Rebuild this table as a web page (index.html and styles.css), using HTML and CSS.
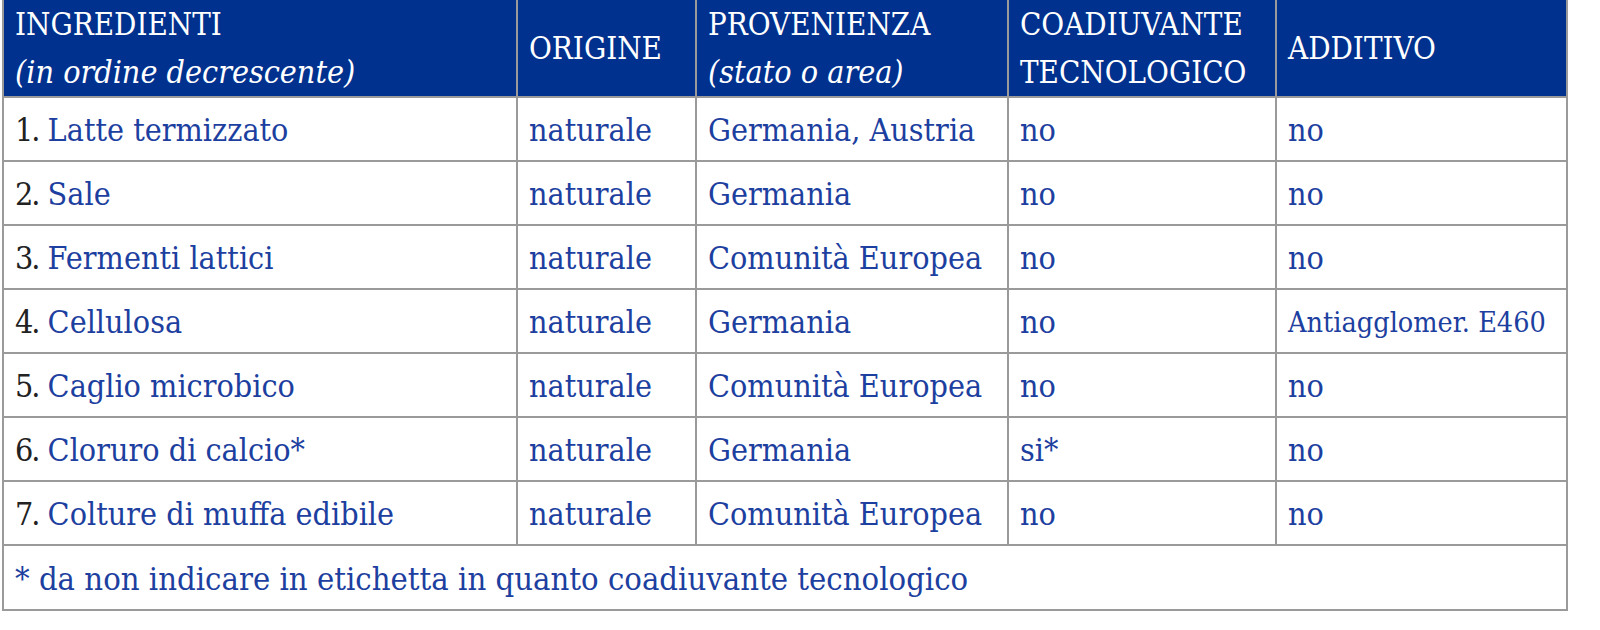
FILE: index.html
```html
<!DOCTYPE html>
<html lang="it">
<head>
<meta charset="utf-8">
<title>Ingredienti</title>
<link rel="stylesheet" href="styles.css">
</head>
<body>
<div class="wrap">
<table class="ing">
<colgroup>
<col class="c1"><col class="c2"><col class="c3"><col class="c4"><col class="c5">
</colgroup>
<thead>
<tr>
<th>INGREDIENTI<br><span class="sub">(in ordine decrescente)</span></th>
<th>ORIGINE</th>
<th>PROVENIENZA<br><span class="sub">(stato o area)</span></th>
<th>COADIUVANTE<br>TECNOLOGICO</th>
<th>ADDITIVO</th>
</tr>
</thead>
<tbody>
<tr><td><span class="num">1.</span> Latte termizzato</td><td>naturale</td><td>Germania, Austria</td><td>no</td><td>no</td></tr>
<tr><td><span class="num">2.</span> Sale</td><td>naturale</td><td>Germania</td><td>no</td><td>no</td></tr>
<tr><td><span class="num">3.</span> Fermenti lattici</td><td>naturale</td><td>Comunità Europea</td><td>no</td><td>no</td></tr>
<tr><td><span class="num">4.</span> Cellulosa</td><td>naturale</td><td>Germania</td><td>no</td><td class="small">Antiagglomer. E460</td></tr>
<tr><td><span class="num">5.</span> Caglio microbico</td><td>naturale</td><td>Comunità Europea</td><td>no</td><td>no</td></tr>
<tr><td><span class="num">6.</span> Cloruro di calcio*</td><td>naturale</td><td>Germania</td><td>si*</td><td>no</td></tr>
<tr><td><span class="num">7.</span> Colture di muffa edibile</td><td>naturale</td><td>Comunità Europea</td><td>no</td><td>no</td></tr>
<tr><td colspan="5" class="note">* da non indicare in etichetta in quanto coadiuvante tecnologico</td></tr>
</tbody>
</table>
</div>
</body>
</html>
```

FILE: styles.css
```css
html, body {
  margin: 0;
  padding: 0;
  background: #ffffff;
}
.wrap {
  padding: 0 0 0 2px;
}
.ing {
  border-collapse: collapse;
  table-layout: fixed;
  width: 1564px;
  font-family: "DejaVu Serif", "Liberation Serif", serif;
  font-stretch: condensed;
  font-size: 32px;
  color: #1d3f9f;
}
.c1 { width: 514px; }
.c2 { width: 179px; }
.c3 { width: 312px; }
.c4 { width: 268px; }
.c5 { width: 291px; }
.ing th {
  background: #00318f;
  color: #ffffff;
  font-weight: normal;
  font-size: 31px;
  text-align: left;
  vertical-align: middle;
  height: 97px;
  padding: 0 8px 0 11px;
  border: 2px solid #9a9a9a;
  border-top: none;
  line-height: 48px;
  box-sizing: border-box;
  white-space: nowrap;
}
.ing th .sub {
  font-style: italic;
  font-size: 32px;
}
.ing td {
  height: 64px;
  box-sizing: border-box;
  padding: 2px 8px 0 11px;
  border: 2px solid #9a9a9a;
  vertical-align: middle;
  white-space: nowrap;
}
.ing tr:last-child td {
  height: 65px;
}
.ing .num {
  color: #222222;
  letter-spacing: -2px;
  margin-right: 0;
}
.ing td.small {
  font-size: 28.5px;
}
.ing td.note {
  font-size: 32.5px;
}
```
